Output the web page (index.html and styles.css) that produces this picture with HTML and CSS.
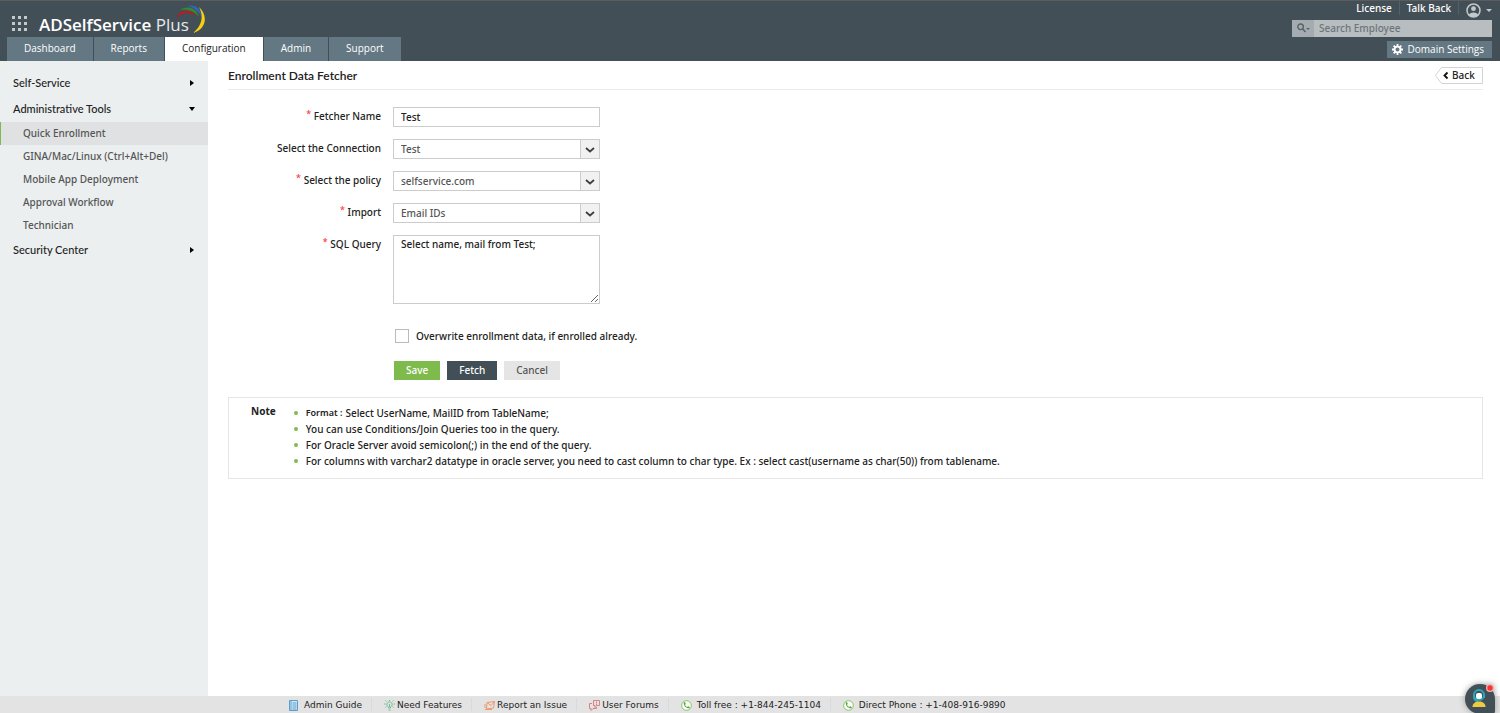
FILE: index.html
```html
<!DOCTYPE html>
<html lang="en">
<head>
  <meta charset="utf-8">
  <title>ADSelfService Plus</title>
  <link rel="stylesheet" href="styles.css">
</head>
<body>
  <header class="header">
    <div class="header-left">
      <div class="brand">
        <svg class="apps" viewBox="0 0 15 15" fill="#c3c8cb">
          <path d="M0 0h3v3H0zM6 0h3v3H6zM12 0h3v3h-3zM0 6h3v3H0zM6 6h3v3H6zM12 6h3v3h-3zM0 12h3v3H0zM6 12h3v3H6zM12 12h3v3h-3z"/>
        </svg>
        <span class="logo"><b>ADSelfService</b> Plus</span>
        <svg class="swoosh" viewBox="0 0 30 29">
          <path d="M0 14C3 4 15 3 21 11C15 7 6 6 0 14z" fill="#c4161c"/>
          <path d="M4 5C12 0 21 3 23 12C18 6 12 4 4 5z" fill="#2c8a3c"/>
          <path d="M12 1C19-1 26 4 26 13C23 6 18 3 12 1z" fill="#3565ac"/>
          <path d="M23 2C32 10 31 24 17 28C26 21 28 11 23 2z" fill="#f8cf0c"/>
        </svg>
      </div>
      <nav class="tabs">
        <a href="#">Dashboard</a>
        <a href="#">Reports</a>
        <a href="#" class="active">Configuration</a>
        <a href="#">Admin</a>
        <a href="#">Support</a>
      </nav>
    </div>
    <div class="header-right">
      <div class="top-links">
        <a href="#">License</a>
        <a href="#">Talk Back</a>
        <button class="user" aria-label="Account">
          <svg width="15" height="15" viewBox="0 0 15 15">
            <circle cx="7.5" cy="7.5" r="6.5" fill="none" stroke="#c3c8cb" stroke-width="1.5"/>
            <circle cx="7.5" cy="5.7" r="2.4" fill="#c3c8cb"/>
            <path d="M2.8 12C3.5 8.5 11.5 8.5 12.2 12C9.5 14.5 5.5 14.5 2.8 12z" fill="#c3c8cb"/>
          </svg>
          <svg width="6" height="3" viewBox="0 0 6 3"><path d="M0 0h6L3 3z" fill="#c3c8cb"/></svg>
        </button>
      </div>
      <div class="search">
        <button class="search-btn" aria-label="Search options">
          <svg width="13" height="10" viewBox="0 0 13 10">
            <circle cx="3.6" cy="3.8" r="2.8" fill="none" stroke="#59636a" stroke-width="1.4"/>
            <path d="M5.6 5.8L8.5 9" stroke="#59636a" stroke-width="1.6"/>
            <path d="M9 5h4l-2 2z" fill="#59636a"/>
          </svg>
        </button>
        <input type="text" aria-label="Search Employee" placeholder="Search Employee">
      </div>
      <button class="domain">
        <svg width="11" height="11" viewBox="0 0 12 12">
          <path d="M6 0v12M0 6h12M1.8 1.8l8.4 8.4M10.2 1.8l-8.4 8.4" stroke="#fff" stroke-width="2"/>
          <circle cx="6" cy="6" r="3.2" fill="#647883" stroke="#fff" stroke-width="2"/>
        </svg>
        Domain Settings
      </button>
    </div>
  </header>

  <div class="page">
    <aside class="sidebar">
      <a href="#" class="group">Self-Service <span class="arrow-right"></span></a>
      <a href="#" class="group">Administrative Tools <span class="arrow-down"></span></a>
      <a href="#" class="item selected">Quick Enrollment</a>
      <a href="#" class="item">GINA/Mac/Linux (Ctrl+Alt+Del)</a>
      <a href="#" class="item">Mobile App Deployment</a>
      <a href="#" class="item">Approval Workflow</a>
      <a href="#" class="item">Technician</a>
      <a href="#" class="group">Security Center <span class="arrow-right"></span></a>
    </aside>

    <main class="content">
      <div class="title-bar">
        <h1>Enrollment Data Fetcher</h1>
        <a href="#" class="back">
          <svg class="back-shape" viewBox="0 0 48 17"><path d="M6.5 .5h41v16h-41L.5 8.5z" fill="#fff" stroke="#d3d3d3"/><path d="M12.5 5.5l-3 3 3 3" fill="none" stroke="#111" stroke-width="1.8"/></svg>
          <span>Back</span>
        </a>
      </div>

      <form class="form">
        <label for="name"><span class="req">*</span> Fetcher Name</label>
        <input type="text" id="name" value="Test">

        <label for="connection">Select the Connection</label>
        <div class="select">
          <select id="connection"><option>Test</option></select>
          <svg viewBox="0 0 18 18"><path d="M5 8l4 3.5L13 8" fill="none" stroke="#3a3f43" stroke-width="1.8"/></svg>
        </div>

        <label for="policy"><span class="req">*</span> Select the policy</label>
        <div class="select">
          <select id="policy"><option>selfservice.com</option></select>
          <svg viewBox="0 0 18 18"><path d="M5 8l4 3.5L13 8" fill="none" stroke="#3a3f43" stroke-width="1.8"/></svg>
        </div>

        <label for="import"><span class="req">*</span> Import</label>
        <div class="select">
          <select id="import"><option>Email IDs</option></select>
          <svg viewBox="0 0 18 18"><path d="M5 8l4 3.5L13 8" fill="none" stroke="#3a3f43" stroke-width="1.8"/></svg>
        </div>

        <label for="query"><span class="req">*</span> SQL Query</label>
        <textarea id="query">Select name, mail from Test;</textarea>

        <div class="overwrite">
          <input type="checkbox" id="overwrite">
          <label for="overwrite">Overwrite enrollment data, if enrolled already.</label>
        </div>

        <div class="buttons">
          <button type="button" class="save">Save</button>
          <button type="button" class="fetch">Fetch</button>
          <button type="button" class="cancel">Cancel</button>
        </div>
      </form>

      <section class="note">
        <h2>Note</h2>
        <ul>
          <li><b>Format :</b> Select UserName, MailID from TableName;</li>
          <li>You can use Conditions/Join Queries too in the query.</li>
          <li>For Oracle Server avoid semicolon(;) in the end of the query.</li>
          <li>For columns with varchar2 datatype in oracle server, you need to cast column to char type. Ex : select cast(username as char(50)) from tablename.</li>
        </ul>
      </section>
    </main>
  </div>

  <footer class="footer">
    <a href="#">
      <svg viewBox="0 0 11 11"><path d="M1.5.5h8v10h-8z" fill="#d4e8f5" stroke="#5b9dcb"/><path d="M3 .5v10M4.5 3h4M4.5 5h4M4.5 7h4M4.5 9h4" stroke="#5b9dcb"/></svg>
      Admin Guide
    </a>
    <a href="#" class="tight">
      <svg viewBox="0 0 11 11" fill="none" stroke="#6dbd96"><path d="M4.5 8V7C1.5 5 3 2 5.5 2S9.5 5 6.5 7v1zM4.5 10h2M5.5 0v1M0 4h1.5M9.5 4H11M1.5.5l1 1M9.5.5l-1 1M1.5 7.5l1-1M9.5 7.5l-1-1M5.5 4v3"/></svg>
      Need Features
    </a>
    <a href="#" class="tight">
      <svg viewBox="0 0 11 11" fill="none" stroke="#ed9a6c"><path d="M3 2.5l7.5-1-1 6.5-7 1zM3 2.5l4 3 3.5-4M0 5h2M0 7h2M1 9.5h7"/></svg>
      Report an Issue
    </a>
    <a href="#" class="tight">
      <svg viewBox="0 0 11 11" fill="none" stroke="#d8837f"><path d="M4.5.5h6v5h-3l-1.5 2v-2H4.5zM3 3.5H.5v5H2v2l2-2h3.5V7M7.5 1.5v2M7.5 4v1"/></svg>
      User Forums
    </a>
    <span>
      <svg viewBox="0 0 11 11"><circle cx="5.5" cy="5.5" r="4.8" fill="#fff" stroke="#86c45b"/><path d="M2.8 2.5C2.5 6 5 8.5 8.5 8.3L8.8 7 7.2 6.2 6.2 7C5 6.5 4.3 5.7 4 4.7L4.8 4 4 2z" fill="#51a83a"/></svg>
      Toll free : +1-844-245-1104
    </span>
    <span>
      <svg viewBox="0 0 11 11"><circle cx="5.5" cy="5.5" r="4.8" fill="#fff" stroke="#86c45b"/><path d="M2.8 2.5C2.5 6 5 8.5 8.5 8.3L8.8 7 7.2 6.2 6.2 7C5 6.5 4.3 5.7 4 4.7L4.8 4 4 2z" fill="#51a83a"/></svg>
      Direct Phone : +1-408-916-9890
    </span>
  </footer>

  <button class="chat" aria-label="Chat with support">
    <svg viewBox="0 0 32 32">
      <path d="M16 1a15 15 0 0 0 0 30h12q3 0 3-3V16A15 15 0 0 0 16 1z" fill="#434f57"/>
      <circle cx="15" cy="12" r="5" fill="none" stroke="#27a9bd" stroke-width="2"/>
      <path d="M10 12v3q1 3 4 3M20 11v4" fill="none" stroke="#27a9bd" stroke-width="2"/>
      <rect x="12" y="10" width="6" height="6" rx="2" fill="#fff"/>
      <path d="M8.5 24C8 16.5 22 16.5 21.5 24z" fill="#eccb43"/>
      <circle cx="26" cy="5" r="4" fill="#f6b1b1"/>
      <circle cx="26" cy="5" r="2.7" fill="#f0353b"/>
    </svg>
  </button>
</body>
</html>
```
FILE: styles.css
```css
* {
  box-sizing: border-box;
}

body {
  margin: 0;
  min-height: 100vh;
  display: flex;
  flex-direction: column;
  font-family: "Noto Sans", Verdana, sans-serif;
  font-size: 10px;
  font-weight: 500;
  color: #222;
  background: #fff;
}

a {
  color: inherit;
  text-decoration: none;
}

button, input, select, textarea {
  font: inherit;
  color: inherit;
}

button {
  border: none;
  padding: 0;
  cursor: pointer;
}

.header {
  display: flex;
  justify-content: space-between;
  background: #434f57;
  border-top: 1px solid #5c5c5c;
  color: #fff;
}

.header-left {
  display: flex;
  flex-direction: column;
  padding-left: 7px;
}

.brand {
  display: flex;
  align-items: flex-end;
  height: 36px;
  padding-left: 5px;
}

.apps {
  width: 15px;
  height: 15px;
  margin-bottom: 6px;
}

.logo {
  margin-left: 12px;
  font-family: "Open Sans", sans-serif;
  font-size: 17px;
  font-weight: 400;
  line-height: 24px;
  color: #e6e8e9;
}

.logo b {
  font-weight: 600;
  color: #fff;
}

.swoosh {
  width: 30px;
  height: 29px;
  margin: 0 0 3px -13px;
}

.tabs {
  display: flex;
  gap: 1px;
}

.tabs a {
  padding: 0 17px 1px;
  line-height: 23px;
  font-family: "Open Sans", sans-serif;
  font-weight: 500;
  background: #647883;
}

.tabs .active {
  background: #fff;
  color: #222;
}

.header-right {
  display: flex;
  flex-direction: column;
  align-items: flex-end;
  padding-right: 8px;
}

.top-links {
  display: flex;
  align-items: center;
  height: 18px;
}

.top-links a {
  line-height: 14px;
  margin-bottom: 4px;
  padding: 0 7px;
  border-right: 1px solid #526069;
}

.user {
  display: flex;
  align-items: center;
  gap: 5px;
  padding-left: 7px;
  background: none;
}

.search {
  display: flex;
  width: 200px;
  height: 17px;
  margin-top: 1px;
  background: #b8bdc0;
}

.search-btn {
  width: 22px;
  background: #a5acb1;
}

.search input {
  flex: 1;
  min-width: 0;
  padding: 0 5px 1px;
  border: none;
  background: none;
}

.search input::placeholder {
  color: #6c757b;
}

.domain {
  display: flex;
  align-items: center;
  gap: 5px;
  height: 17px;
  margin-top: 4px;
  padding: 0 8px 1px 5px;
  font-family: "Open Sans", sans-serif;
  color: #fff;
  background: #647883;
}

.page {
  flex: 1;
  display: flex;
}

.sidebar {
  width: 208px;
  padding-top: 9px;
  background: #ebeff0;
}

.group {
  display: flex;
  align-items: center;
  justify-content: space-between;
  padding: 0 13px;
  line-height: 26px;
  font-family: Lato, sans-serif;
  font-size: 11px;
}

.arrow-right {
  margin-right: 1px;
  border-left: 4px solid #000;
  border-top: 3px solid transparent;
  border-bottom: 3px solid transparent;
}

.arrow-down {
  border-top: 4px solid #000;
  border-left: 3px solid transparent;
  border-right: 3px solid transparent;
}

.item {
  display: block;
  padding-left: 22px;
  border-left: 1px solid transparent;
  line-height: 23px;
  color: #555;
}

.selected {
  background: #dfe1e2;
  border-left-color: #7fba4c;
}

.content {
  flex: 1;
  padding: 0 17px 0 20px;
}

.title-bar {
  display: flex;
  align-items: center;
  justify-content: space-between;
  height: 29px;
  border-bottom: 1px solid #ececec;
}

h1 {
  margin: 0;
  font-family: Lato, sans-serif;
  font-size: 12px;
  font-weight: 600;
}

.back {
  display: grid;
}

.back-shape {
  grid-area: 1 / 1;
  width: 48px;
  height: 17px;
}

.back span {
  grid-area: 1 / 1;
  padding-left: 17px;
  line-height: 17px;
}

.form {
  display: grid;
  grid-template-columns: 153px 207px;
  column-gap: 12px;
  row-gap: 12px;
  padding-top: 17px;
}

.form > label {
  text-align: right;
  line-height: 19px;
}

.req {
  color: #f33;
  font-size: 9px;
  line-height: 0;
  vertical-align: 3px;
}

.form > input, .select, textarea {
  width: 100%;
  height: 20px;
  border: 1px solid #ccc;
  background: #fff;
}

.form > input {
  padding: 0 7px 1px;
}

.select {
  display: grid;
  grid-template-columns: minmax(0, 1fr) 19px;
  grid-template-rows: 18px;
}

select {
  grid-area: 1 / 1 / 2 / 3;
  appearance: none;
  padding: 0 7px 1px;
  border: none;
  background: none;
  color: #555;
}

.select svg {
  grid-area: 1 / 2;
  width: 19px;
  height: 18px;
  border-left: 1px solid #ccc;
  background: #f1f1f1;
  pointer-events: none;
}

textarea {
  display: block;
  height: 69px;
  padding: 1px 7px;
}

.overwrite {
  grid-column: 2;
  display: flex;
  align-items: center;
  gap: 7px;
  height: 14px;
  margin-top: 13px;
  padding-left: 2px;
  white-space: nowrap;
}

.overwrite input {
  flex: none;
  appearance: none;
  width: 14px;
  height: 14px;
  margin: 0;
  border: 1px solid #bbb;
}

.buttons {
  grid-column: 2;
  display: flex;
  gap: 7px;
  margin-top: 6px;
  padding-left: 1px;
}

.buttons button {
  padding: 0 12px 1px;
  line-height: 18px;
  color: #fff;
}

.buttons .save {
  background: #7fba4c;
}

.buttons .fetch {
  background: #434f57;
}

.buttons .cancel {
  background: #e5e5e5;
  color: #555;
}

.note {
  display: flex;
  gap: 18px;
  margin-top: 17px;
  padding: 7px 22px 9px;
  border: 1px solid #e6e6e6;
}

.note h2 {
  margin: 0;
  font-size: 10px;
  line-height: 12px;
}

.note ul {
  margin: 0;
  padding: 0;
  list-style: none;
}

.note li {
  display: flex;
  align-items: center;
  gap: 3px;
  line-height: 16px;
}

.note li::before {
  content: "";
  width: 4px;
  height: 4px;
  margin-right: 5px;
  border-radius: 50%;
  background: #7fba4c;
}

.note b {
  font-size: 9px;
  font-weight: 600;
}

.footer {
  display: flex;
  align-items: center;
  height: 17px;
  padding-left: 276px;
  background: #e3e3e3;
  font-family: "DejaVu Sans", Verdana, sans-serif;
  font-size: 9px;
}

.footer > * {
  display: flex;
  align-items: center;
  gap: 5px;
  padding: 1px 9px 0 12px;
  line-height: 12px;
  border-right: 1px solid #d3dbde;
}

.footer > :last-child {
  border-right: none;
}

.footer .tight {
  gap: 2px;
}

.footer svg {
  width: 11px;
  height: 11px;
}

.chat {
  position: fixed;
  right: 4px;
  bottom: -2px;
  width: 32px;
  height: 32px;
  background: none;
  filter: drop-shadow(0 0 3px #999);
}

.chat svg {
  display: block;
}
```
